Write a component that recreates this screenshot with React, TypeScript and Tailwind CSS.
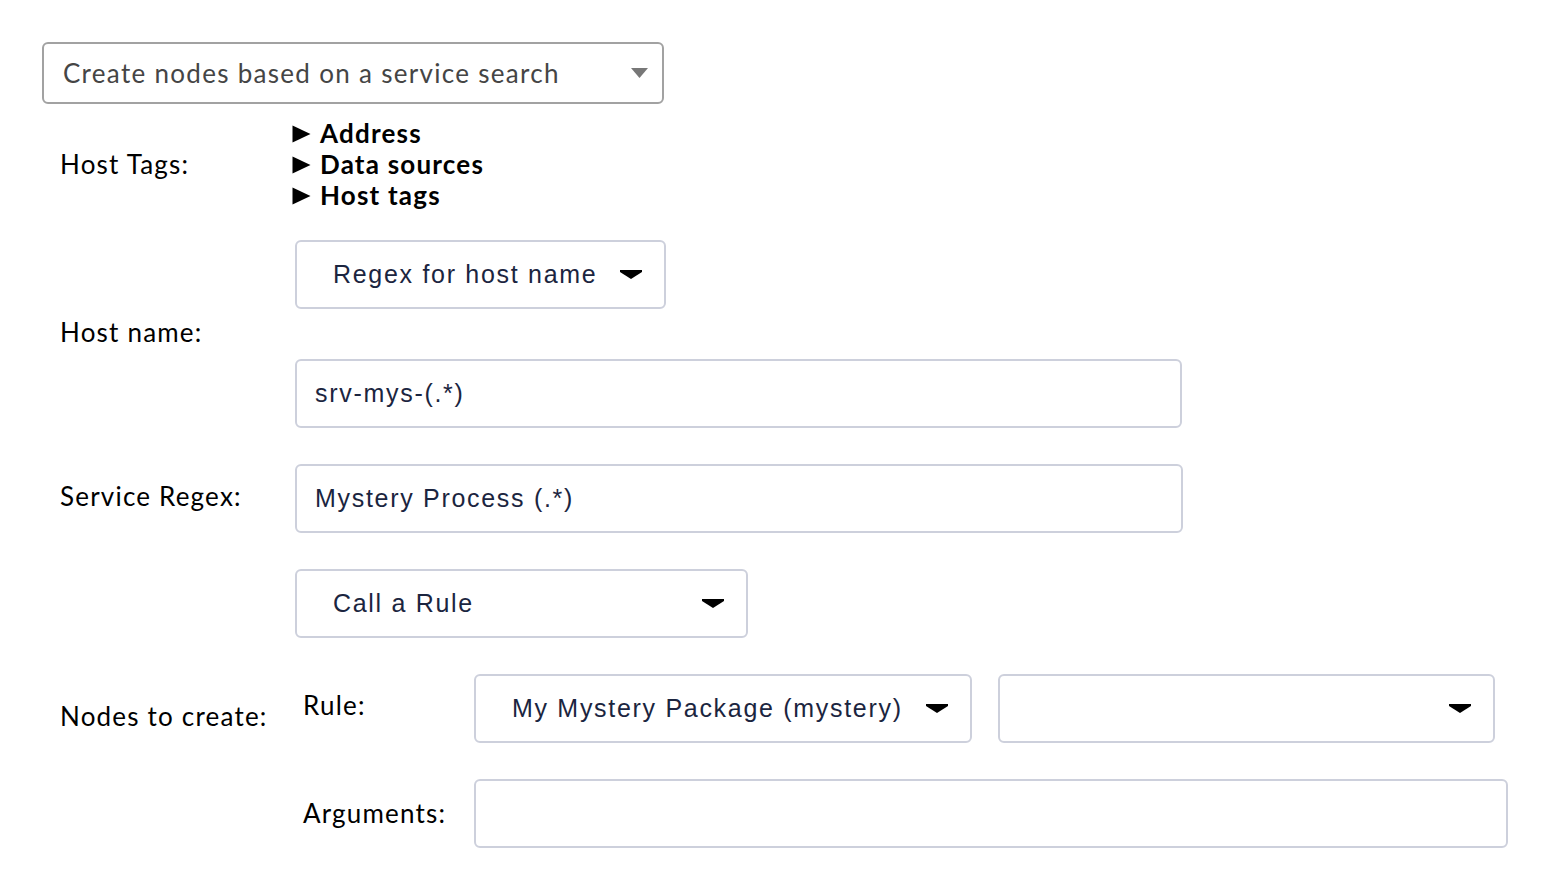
import React from "react";

const lato = { fontFamily: "Lato, 'Noto Sans', sans-serif" };

function Caret() {
  return (
    <svg width="22" height="9" viewBox="0 0 22 9" className="shrink-0">
      <path d="M0 0 H22 V2 L11 9 L0 2 Z" fill="#000" />
    </svg>
  );
}

function Select({ text, className }: { text: string; className: string }) {
  return (
    <div
      className={`flex h-[69px] items-center justify-between rounded-[6px] border-2 border-[#cdd0dc] bg-white pl-[36px] pr-[22px] ${className}`}
    >
      <span className="font-['Liberation_Sans',Arial,sans-serif] text-[25px] tracking-[1.7px] text-[#1b2540]">{text}</span>
      <Caret />
    </div>
  );
}

function Input({ text, className }: { text?: string; className: string }) {
  return (
    <div className={`flex h-[69px] items-center rounded-[6px] border-2 border-[#cdd0dc] bg-white pl-[18px] ${className}`}>
      <span className="font-['Liberation_Sans',Arial,sans-serif] text-[25px] tracking-[1.7px] text-[#1b2540]">{text}</span>
    </div>
  );
}

function TreeItem({ text }: { text: string }) {
  return (
    <div className="flex h-[31px] items-center">
      <svg width="19" height="18" viewBox="0 0 19 18" className="mr-[9px] shrink-0">
        <path d="M0.5 0.5 L18.5 9 L0.5 17.5 Z" fill="#000" />
      </svg>
      <span className="text-[26px] font-bold tracking-[1.2px] text-black">{text}</span>
    </div>
  );
}

const label = "text-[26px] tracking-[1.2px] text-black";

export default function App() {
  return (
    <div className="min-h-[891px] w-full bg-white px-[42px] pt-[42px]" style={lato}>
      {/* top select */}
      <div className="flex h-[62px] w-[622px] items-center justify-between rounded-[6px] border-2 border-[#a2a2a2] pl-[19px] pr-[14px]">
        <span className="text-[26px] tracking-[1.3px] text-[#454545]">Create nodes based on a service search</span>
        <svg width="17" height="10" viewBox="0 0 17 10">
          <path d="M0 0 H17 L8.5 10 Z" fill="#777" />
        </svg>
      </div>

      {/* Host tags */}
      <div className="mt-[14px] flex items-center">
        <div className={`w-[253px] pl-[18px] ${label}`}>Host Tags:</div>
        <div className="-ml-[3px] flex flex-col">
          <TreeItem text="Address" />
          <TreeItem text="Data sources" />
          <TreeItem text="Host tags" />
        </div>
      </div>

      {/* Host name */}
      <div className="mt-[29px] flex items-center">
        <div className={`w-[253px] pb-[4px] pl-[18px] ${label}`}>Host name:</div>
        <div className="flex flex-col">
          <Select text="Regex for host name" className="w-[371px]" />
          <Input text="srv-mys-(.*)" className="mt-[50px] w-[887px]" />
        </div>
      </div>

      {/* Service Regex */}
      <div className="mt-[36px] flex items-center">
        <div className={`w-[253px] pb-[4px] pl-[18px] ${label}`}>Service Regex:</div>
        <Input text="Mystery Process (.*)" className="w-[888px]" />
      </div>

      {/* Nodes to create */}
      <div className="mt-[36px] flex items-center">
        <div className={`w-[253px] pl-[18px] pt-[16px] ${label}`}>Nodes to create:</div>
        <div className="flex flex-col">
          <Select text="Call a Rule" className="w-[453px]" />
          <div className="mt-[36px] flex items-center">
            <div className={`w-[179px] pb-[6px] pl-[8px] ${label}`}>Rule:</div>
            <Select text="My Mystery Package (mystery)" className="w-[498px]" />
            <Select text="" className="ml-[26px] w-[497px]" />
          </div>
          <div className="mt-[36px] flex items-center">
            <div className={`w-[179px] pl-[8px] ${label}`}>Arguments:</div>
            <Input className="w-[1034px]" />
          </div>
        </div>
      </div>
    </div>
  );
}
